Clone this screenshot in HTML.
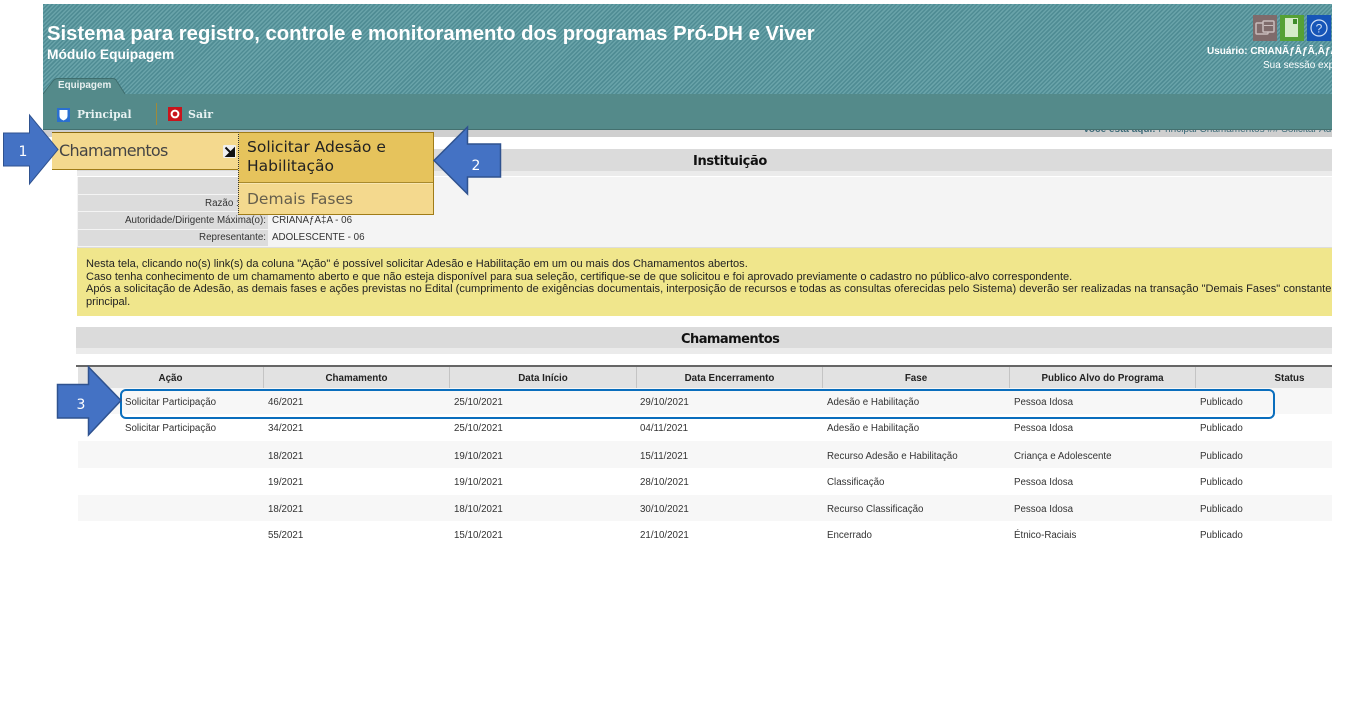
<!DOCTYPE html>
<html lang="pt-BR"><head><meta charset="utf-8"><title>Sistema</title>
<style>
html,body{margin:0;padding:0;background:#fff}
body{width:1356px;height:705px;position:relative;overflow:hidden;font-family:"Liberation Sans",Arial,sans-serif;color:#222}
.a{position:absolute}
.t{position:absolute;white-space:nowrap}
#clip{position:absolute;left:0;top:0;width:1332px;height:705px;overflow:hidden}
#hdr{position:absolute;left:43px;top:4px;width:1289px;height:90px;background:repeating-linear-gradient(135deg,#4f8c94 0 1.5px,#69a3a9 1.5px 3px)}
#bar{position:absolute;left:43px;top:94px;width:1289px;height:35px;background:#548a8a;border-bottom:1px solid #44706f}
.th{position:absolute;top:367px;height:21px;background:#e2e2e2;border-right:1px solid #c4c4c4;font:bold 9.8px/23px "Liberation Sans",sans-serif;text-align:center;color:#222}
.r{position:absolute;left:78px;width:1254px}
.c{position:absolute;font-size:9.75px;white-space:nowrap;color:#333}
.lab{position:absolute;left:78px;width:190px;background:#dcdcdc}
.lt{position:absolute;font-size:9.8px;line-height:15px;color:#333;white-space:nowrap}
</style></head><body>
<div id="clip">
<div id="hdr"></div>
<div class="t" style="left:47px;top:22px;font:bold 20.27px/24px 'Liberation Sans',sans-serif;color:#fff">Sistema para registro, controle e monitoramento dos programas Pró-DH e Viver</div>
<div class="t" style="left:47px;top:46px;font:bold 13.8px/17px 'Liberation Sans',sans-serif;color:#fff">Módulo Equipagem</div>

<svg class="a" style="left:1253px;top:15px" width="79" height="26" viewBox="0 0 79 26">
<rect x="0" y="0" width="24" height="26" fill="#7f6b6b"/>
<rect x="3" y="8" width="12" height="11" rx="1" fill="none" stroke="#c9bcbc" stroke-width="1.5"/><rect x="10" y="6" width="11" height="11" rx="1" fill="#7f6b6b" stroke="#c9bcbc" stroke-width="1.5"/><path d="M11 10.500H20" stroke="#c9bcbc"/>
<rect x="27" y="0" width="24" height="26" fill="#55a135"/>
<path d="M32 3H45V22H32Z" fill="#d5ecc9"/><rect x="40" y="4" width="4" height="5" fill="#3e8c2a"/>
<rect x="54" y="0" width="24" height="26" fill="#1655b8"/>
<circle cx="66" cy="13" r="8" fill="none" stroke="#cfe0f7" stroke-width="1.2"/>
<text x="66" y="17.500" text-anchor="middle" font-family="Liberation Sans" font-size="12" fill="#cfe0f7">?</text>
</svg>
<div class="t" style="left:1207px;top:46px;font:bold 10px/12px 'Liberation Sans',sans-serif;color:#fff">Usuário: CRIANÃƒÂƒÃ‚ÂƒÃƒÂ‚Ã‚</div>
<div class="t" style="left:1263px;top:60px;font:10px/12px 'Liberation Sans',sans-serif;color:#fff">Sua sessão expira em 30 minutos</div>

<div id="bar"></div>
<svg class="a" style="left:43px;top:77px" width="84" height="18" viewBox="0 0 84 18"><path d="M0 17.500 L10 4 Q12 1.500 15 1.500 H70 Q72 1.500 73 3 L82 17.500 H0Z" fill="#548a8a"/><path d="M0 17 L10 4 Q12 1.500 15 1.500 H70 Q72 1.500 73 3 L82 17" fill="none" stroke="#3f6e6e"/></svg>
<div class="t" style="left:58px;top:80px;font:bold 9.9px/12px 'Liberation Sans',sans-serif;color:#e8f0f0">Equipagem</div>

<svg class="a" style="left:57px;top:108px" width="13" height="14" viewBox="0 0 13 14"><rect width="13" height="14" fill="#2a6fd0"/><path d="M2.500 2H10.500V8Q10.500 11 6.500 12.500Q2.500 11 2.500 8Z" fill="#fff"/></svg>
<div class="t" style="left:77px;top:107px;font:bold 10.7px/15px 'DejaVu Serif',serif;color:#e8f2f2">Principal</div>
<div class="a" style="left:156px;top:103px;width:1px;height:22px;background:#a08a3a"></div>
<svg class="a" style="left:168px;top:107px" width="14" height="14" viewBox="0 0 14 14"><rect width="14" height="14" fill="#c9141c"/><circle cx="7" cy="7" r="3.400" fill="none" stroke="#fff" stroke-width="2"/></svg>
<div class="t" style="left:188px;top:107px;font:bold 11px/15px 'DejaVu Serif',serif;color:#e8f2f2">Sair</div>

<div class="a" style="left:43px;top:130px;width:1289px;height:7px;background:#cfcfcf;overflow:hidden"><div class="t" style="left:1040px;top:-6px;font:bold 10px/12px 'Liberation Sans',sans-serif;color:#3d6a78">Você está aqui: <span style="font-weight:normal">Principal Chamamentos ## Solicitar Adesão</span></div></div>

<div class="a" style="left:77px;top:149px;width:1255px;height:22px;background:#dbdbdb"></div>
<div class="a" style="left:77px;top:171px;width:1255px;height:5px;background:#ebebeb"></div>
<div class="t" style="left:693px;top:153px;font:bold 13px/18px 'DejaVu Sans',sans-serif;color:#111;letter-spacing:-.35px">Instituição</div>

<div class="a" style="left:77px;top:177px;width:1255px;height:70px;background:#f4f4f4"></div>
<div class="lab" style="top:177px;height:17px"></div>
<div class="lab" style="top:195px;height:16px"></div>
<div class="lab" style="top:212px;height:17px"></div>
<div class="lab" style="top:230px;height:16px"></div>
<div class="lt" style="left:205px;top:196px">Razão :</div>
<div class="lt" style="right:1066px;top:213px">Autoridade/Dirigente Máxima(o):</div>
<div class="lt" style="right:1066px;top:230px">Representante:</div>
<div class="lt" style="left:272px;top:213px">CRIANÃƒÂ‡A - 06</div>
<div class="lt" style="left:272px;top:230px">ADOLESCENTE - 06</div>

<div class="a" style="left:77px;top:247px;width:1255px;height:69px;background:#f0e68c;border-top:1px solid #ddd;box-sizing:border-box"></div>
<div class="t" style="left:86px;top:258px;font-size:11.05px;line-height:12.500px;color:#222">Nesta tela, clicando no(s) link(s) da coluna "Ação" é possível solicitar Adesão e Habilitação em um ou mais dos Chamamentos abertos.<br>Caso tenha conhecimento de um chamamento aberto e que não esteja disponível para sua seleção, certifique-se de que solicitou e foi aprovado previamente o cadastro no público-alvo correspondente.<br><span style="letter-spacing:.016px">Após a solicitação de Adesão, as demais fases e ações previstas no Edital (cumprimento de exigências documentais, interposição de recursos e todas as consultas oferecidas pelo Sistema) deverão ser realizadas na transação "Demais Fases" constante no menu</span><br>principal.</div>

<div class="a" style="left:76px;top:327px;width:1256px;height:21px;background:#dbdbdb"></div>
<div class="a" style="left:76px;top:348px;width:1256px;height:6px;background:#ebebeb"></div>
<div class="t" style="left:681px;top:331px;font:bold 13px/18px 'DejaVu Sans',sans-serif;color:#111;letter-spacing:-.55px">Chamamentos</div>

<div class="a" style="left:76px;top:365px;width:1256px;height:2px;background:#666"></div>
<div class="th" style="left:78px;width:185px">Ação</div>
<div class="th" style="left:264px;width:185px">Chamamento</div>
<div class="th" style="left:450px;width:186px">Data Início</div>
<div class="th" style="left:637px;width:185px">Data Encerramento</div>
<div class="th" style="left:823px;width:186px">Fase</div>
<div class="th" style="left:1010px;width:185px">Publico Alvo do Programa</div>
<div class="th" style="left:1196px;width:187px;border:0">Status</div>

<div class="r" style="top:388px;height:26px;background:#f7f7f7"></div>
<div class="r" style="top:441px;height:27px;background:#f7f7f7"></div>
<div class="r" style="top:495px;height:26px;background:#f7f7f7"></div>

<div class="c" style="left:125px;top:397px">Solicitar Participação</div><div class="c" style="left:268px;top:397px">46/2021</div><div class="c" style="left:454px;top:397px">25/10/2021</div><div class="c" style="left:640px;top:397px">29/10/2021</div><div class="c" style="left:827px;top:397px">Adesão e Habilitação</div><div class="c" style="left:1014px;top:397px">Pessoa Idosa</div><div class="c" style="left:1200px;top:397px">Publicado</div>
<div class="c" style="left:125px;top:423px">Solicitar Participação</div><div class="c" style="left:268px;top:423px">34/2021</div><div class="c" style="left:454px;top:423px">25/10/2021</div><div class="c" style="left:640px;top:423px">04/11/2021</div><div class="c" style="left:827px;top:423px">Adesão e Habilitação</div><div class="c" style="left:1014px;top:423px">Pessoa Idosa</div><div class="c" style="left:1200px;top:423px">Publicado</div>
<div class="c" style="left:268px;top:451px">18/2021</div><div class="c" style="left:454px;top:451px">19/10/2021</div><div class="c" style="left:640px;top:451px">15/11/2021</div><div class="c" style="left:827px;top:451px">Recurso Adesão e Habilitação</div><div class="c" style="left:1014px;top:451px">Criança e Adolescente</div><div class="c" style="left:1200px;top:451px">Publicado</div>
<div class="c" style="left:268px;top:477px">19/2021</div><div class="c" style="left:454px;top:477px">19/10/2021</div><div class="c" style="left:640px;top:477px">28/10/2021</div><div class="c" style="left:827px;top:477px">Classificação</div><div class="c" style="left:1014px;top:477px">Pessoa Idosa</div><div class="c" style="left:1200px;top:477px">Publicado</div>
<div class="c" style="left:268px;top:504px">18/2021</div><div class="c" style="left:454px;top:504px">18/10/2021</div><div class="c" style="left:640px;top:504px">30/10/2021</div><div class="c" style="left:827px;top:504px">Recurso Classificação</div><div class="c" style="left:1014px;top:504px">Pessoa Idosa</div><div class="c" style="left:1200px;top:504px">Publicado</div>
<div class="c" style="left:268px;top:530px">55/2021</div><div class="c" style="left:454px;top:530px">15/10/2021</div><div class="c" style="left:640px;top:530px">21/10/2021</div><div class="c" style="left:827px;top:530px">Encerrado</div><div class="c" style="left:1014px;top:530px">Étnico-Raciais</div><div class="c" style="left:1200px;top:530px">Publicado</div>
</div>

<!-- Chamamentos menu -->
<div class="a" style="left:52px;top:132px;width:187px;height:38px;background:#f4d98e;border-top:1px solid #8a6a10;border-bottom:1px solid #a07c18;box-sizing:border-box"></div>
<div class="t" style="left:59px;top:141px;font:16px/20px 'DejaVu Sans',sans-serif;color:#444;letter-spacing:-.72px">Chamamentos</div>
<svg class="a" style="left:223px;top:145px" width="13" height="13" viewBox="0 0 13 13"><rect width="13" height="13" rx="1.500" fill="#f0f0f0"/><path d="M2.500 2.500 L7.500 7.500 M11 4 V11 H4Z" fill="#111" stroke="#111" stroke-width="2"/></svg>

<!-- Submenu -->
<div class="a" style="left:238px;top:132px;width:196px;height:83px;background:#f4d98e;border:1px solid #a07c18;border-left:1px dotted #333;box-sizing:border-box"></div>
<div class="a" style="left:239px;top:133px;width:194px;height:49px;background:#e6c35c;border-bottom:1px solid #a88a2c"></div>
<div class="a" style="left:239px;top:183px;width:194px;height:1px;background:#f8e6b0"></div>
<div class="t" style="left:247px;top:138px;font:15.5px/19px 'DejaVu Sans',sans-serif;color:#222">Solicitar Adesão e<br>Habilitação</div>
<div class="t" style="left:247px;top:190px;font:15.5px/19px 'DejaVu Sans',sans-serif;color:#665f4c">Demais Fases</div>

<!-- Rounded highlight -->
<div class="a" style="left:120px;top:389px;width:1155px;height:30px;border:2px solid #0a6ebd;border-radius:6px;box-sizing:border-box"></div>

<!-- Arrows -->
<svg class="a" style="left:0;top:0" width="520" height="450" viewBox="0 0 520 450">
<path d="M3.500 133 H29.500 V115 L58 149.500 L29.500 184 V166 H3.500Z" fill="#4472c4" stroke="#2f528f" stroke-width="1"/>
<path d="M500.500 144 H467.500 V127 L434 160.500 L467.500 194 V177 H500.500 Z" fill="#4472c4" stroke="#2f528f" stroke-width="1.500"/>
<path d="M57.500 384.500 H88.500 V367 L121 400.500 L88.500 435 V418 H57.500Z" fill="#4472c4" stroke="#2f528f" stroke-width="1.500"/>
<text x="23" y="156" text-anchor="middle" font-family="DejaVu Sans" font-size="14" fill="#fff">1</text>
<text x="476" y="170" text-anchor="middle" font-family="DejaVu Sans" font-size="14" fill="#fff">2</text>
<text x="81" y="409" text-anchor="middle" font-family="DejaVu Sans" font-size="14" fill="#fff">3</text>
</svg>
</body></html>
